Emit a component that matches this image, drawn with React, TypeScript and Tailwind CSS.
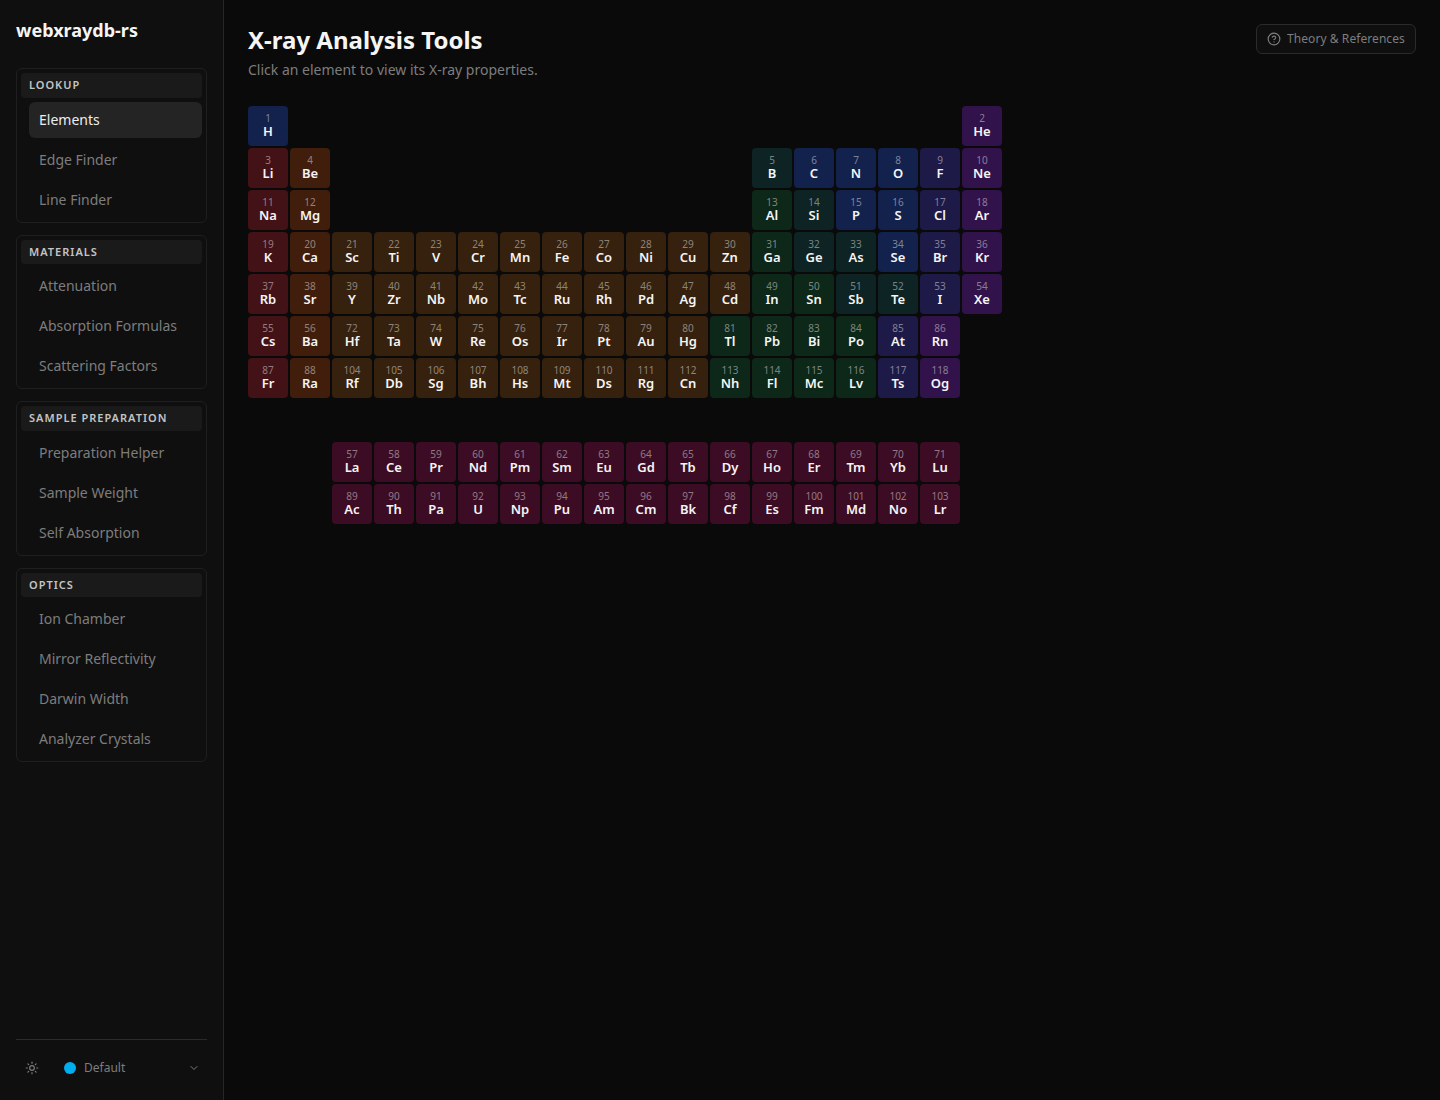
import { ChevronDown, CircleHelp, Sun } from "lucide-react";

type Category =
  | "alkali"
  | "alkaline"
  | "transition"
  | "post"
  | "metalloid"
  | "nonmetal"
  | "halogen"
  | "noble"
  | "fblock";

const categoryColor: Record<Category, string> = {
  alkali: "bg-[#431216]",
  alkaline: "bg-[#411e0c]",
  transition: "bg-[#35210e]",
  post: "bg-[#0d2719]",
  metalloid: "bg-[#0d2324]",
  nonmetal: "bg-[#13214d]",
  halogen: "bg-[#1e1a47]",
  noble: "bg-[#31124a]",
  fblock: "bg-[#3c0c24]",
};

// z, symbol, category, column, row
type Element = [number, string, Category, number, number];

function series(start: number, symbols: string, cat: Category, col: number, row: number): Element[] {
  return symbols.split(" ").map((s, i) => [start + i, s, cat, col + i, row]);
}

const mainTable: Element[] = [
  [1, "H", "nonmetal", 1, 1],
  [2, "He", "noble", 18, 1],
  [3, "Li", "alkali", 1, 2],
  [4, "Be", "alkaline", 2, 2],
  [5, "B", "metalloid", 13, 2],
  ...series(6, "C N O", "nonmetal", 14, 2),
  [9, "F", "halogen", 17, 2],
  [10, "Ne", "noble", 18, 2],
  [11, "Na", "alkali", 1, 3],
  [12, "Mg", "alkaline", 2, 3],
  [13, "Al", "post", 13, 3],
  [14, "Si", "metalloid", 14, 3],
  ...series(15, "P S", "nonmetal", 15, 3),
  [17, "Cl", "halogen", 17, 3],
  [18, "Ar", "noble", 18, 3],
  [19, "K", "alkali", 1, 4],
  [20, "Ca", "alkaline", 2, 4],
  ...series(21, "Sc Ti V Cr Mn Fe Co Ni Cu Zn", "transition", 3, 4),
  [31, "Ga", "post", 13, 4],
  ...series(32, "Ge As", "metalloid", 14, 4),
  [34, "Se", "nonmetal", 16, 4],
  [35, "Br", "halogen", 17, 4],
  [36, "Kr", "noble", 18, 4],
  [37, "Rb", "alkali", 1, 5],
  [38, "Sr", "alkaline", 2, 5],
  ...series(39, "Y Zr Nb Mo Tc Ru Rh Pd Ag Cd", "transition", 3, 5),
  ...series(49, "In Sn", "post", 13, 5),
  ...series(51, "Sb Te", "metalloid", 15, 5),
  [53, "I", "halogen", 17, 5],
  [54, "Xe", "noble", 18, 5],
  [55, "Cs", "alkali", 1, 6],
  [56, "Ba", "alkaline", 2, 6],
  ...series(72, "Hf Ta W Re Os Ir Pt Au Hg", "transition", 3, 6),
  ...series(81, "Tl Pb Bi Po", "post", 12, 6),
  [85, "At", "halogen", 16, 6],
  [86, "Rn", "noble", 17, 6],
  [87, "Fr", "alkali", 1, 7],
  [88, "Ra", "alkaline", 2, 7],
  ...series(104, "Rf Db Sg Bh Hs Mt Ds Rg Cn", "transition", 3, 7),
  ...series(113, "Nh Fl Mc Lv", "post", 12, 7),
  [117, "Ts", "halogen", 16, 7],
  [118, "Og", "noble", 17, 7],
];

const fBlock: Element[] = [
  ...series(57, "La Ce Pr Nd Pm Sm Eu Gd Tb Dy Ho Er Tm Yb Lu", "fblock", 3, 1),
  ...series(89, "Ac Th Pa U Np Pu Am Cm Bk Cf Es Fm Md No Lr", "fblock", 3, 2),
];

const navSections = [
  { title: "Lookup", items: ["Elements", "Edge Finder", "Line Finder"] },
  { title: "Materials", items: ["Attenuation", "Absorption Formulas", "Scattering Factors"] },
  { title: "Sample Preparation", items: ["Preparation Helper", "Sample Weight", "Self Absorption"] },
  { title: "Optics", items: ["Ion Chamber", "Mirror Reflectivity", "Darwin Width", "Analyzer Crystals"] },
];

function ElementCell({ el }: { el: Element }) {
  const [z, symbol, cat, col, row] = el;
  return (
    <button
      className={`flex h-10 w-10 flex-col items-center justify-center rounded pb-[3px] ${categoryColor[cat]}`}
      style={{ gridColumn: col, gridRow: row }}
    >
      <span className="text-[10px] leading-[12px] text-white/45">{z}</span>
      <span className="text-[13px] leading-[14px] font-semibold text-[#f5f5f5]">{symbol}</span>
    </button>
  );
}

function ElementGrid({ elements }: { elements: Element[] }) {
  return (
    <div className="grid w-fit grid-cols-[repeat(18,40px)] gap-0.5">
      {elements.map((el) => (
        <ElementCell key={el[0]} el={el} />
      ))}
    </div>
  );
}

export default function App() {
  return (
    <div className="flex h-screen bg-[#0a0a0a] font-['Noto_Sans',sans-serif]">
      {/* Sidebar */}
      <aside className="flex w-[224px] shrink-0 flex-col border-r border-[#262626] bg-[#0f0f0f] px-4 pb-4">
        <h2 className="mt-[18px] text-lg leading-[25px] font-bold text-[#f5f5f5]">webxraydb-rs</h2>
        <nav className="mt-[25px] flex flex-col gap-3">
          {navSections.map((section) => (
            <div key={section.title} className="flex flex-col gap-1 rounded-md border border-[#1f1f1f] p-1">
              <div className="flex h-[24.5px] items-center rounded bg-[#1a1a1a] px-2 text-[11px] font-semibold tracking-[1px] text-[#c4c4c4] uppercase">
                {section.title}
              </div>
              {section.items.map((item) => (
                <a
                  key={item}
                  className={`ml-2 flex h-9 items-center rounded-md px-2.5 text-sm ${
                    item === "Elements" ? "bg-[#242424] text-[#ededed]" : "text-[#7d7d7d]"
                  }`}
                >
                  {item}
                </a>
              ))}
            </div>
          ))}
        </nav>
        <div className="mt-auto flex h-[45px] items-end border-t border-[#2a2a2a] pb-[8px] text-xs text-[#7d7d7d]">
          <div className="flex w-full items-center">
            <Sun className="ml-[9px] h-[14px] w-[14px]" />
            <span className="ml-[25px] h-3 w-3 rounded-full bg-[#00aeef]" />
            <span className="ml-2">Default</span>
            <ChevronDown className="mr-[7px] ml-auto h-3 w-3" />
          </div>
        </div>
      </aside>

      {/* Main */}
      <main className="flex-1 px-6 pt-6">
        <div className="flex items-start justify-between">
          <div>
            <h1 className="text-2xl leading-8 font-bold text-[#f5f5f5]">X-ray Analysis Tools</h1>
            <p className="mt-1 text-sm leading-5 text-[#7d7d7d]">Click an element to view its X-ray properties.</p>
          </div>
          <button className="flex h-[30px] w-40 items-center gap-1.5 rounded-md border border-[#2a2a2a] bg-[#0f0f0f] px-2.5 text-xs tracking-[0.07px] whitespace-nowrap text-[#7d7d7d]">
            <CircleHelp className="h-[14px] w-[14px]" />
            Theory &amp; References
          </button>
        </div>
        <div className="mt-[26px]">
          <ElementGrid elements={mainTable} />
        </div>
        <div className="mt-[44px]">
          <ElementGrid elements={fBlock} />
        </div>
      </main>
    </div>
  );
}
